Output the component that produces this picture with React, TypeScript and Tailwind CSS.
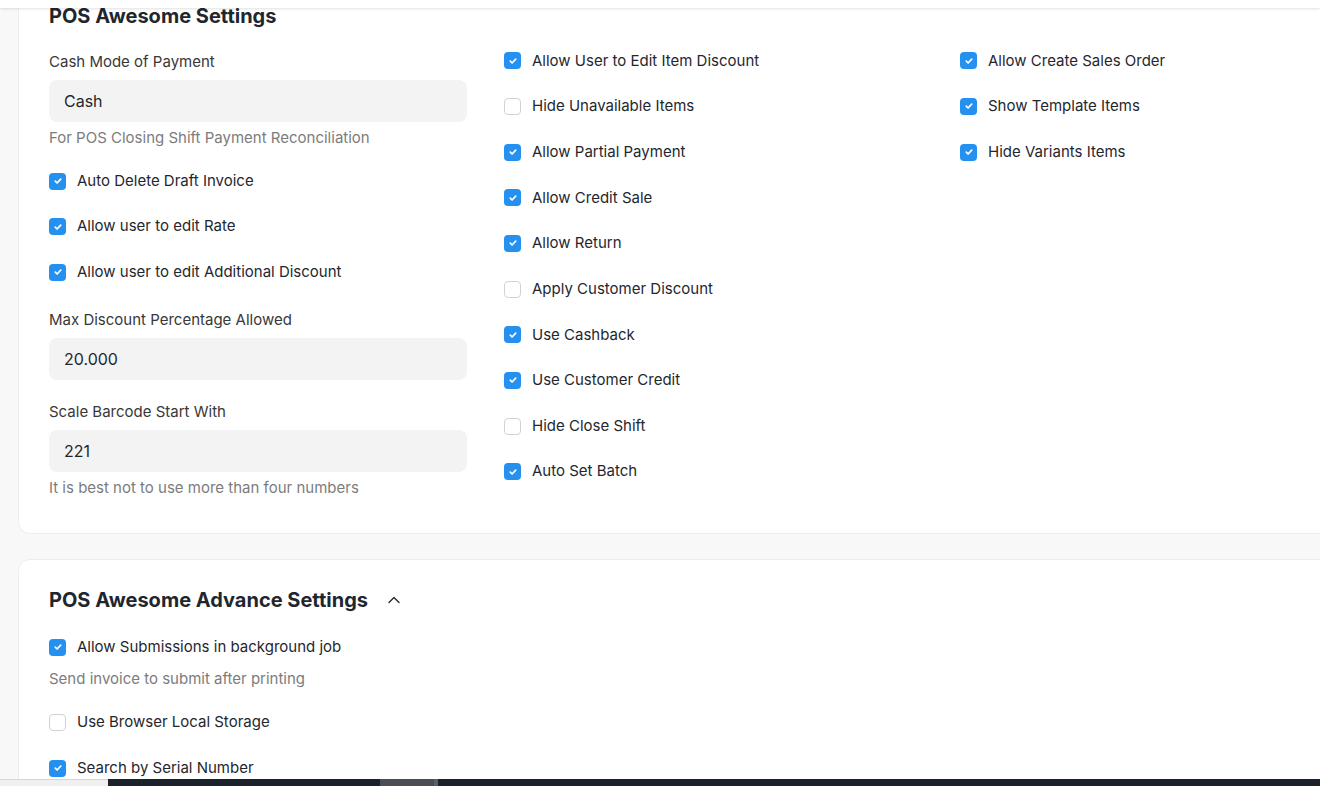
import { ChevronUp } from 'lucide-react'

type Item = { label: string; checked: boolean }

const col2: Item[] = [
  { label: 'Allow User to Edit Item Discount', checked: true },
  { label: 'Hide Unavailable Items', checked: false },
  { label: 'Allow Partial Payment', checked: true },
  { label: 'Allow Credit Sale', checked: true },
  { label: 'Allow Return', checked: true },
  { label: 'Apply Customer Discount', checked: false },
  { label: 'Use Cashback', checked: true },
  { label: 'Use Customer Credit', checked: true },
  { label: 'Hide Close Shift', checked: false },
  { label: 'Auto Set Batch', checked: true },
]

const col3: Item[] = [
  { label: 'Allow Create Sales Order', checked: true },
  { label: 'Show Template Items', checked: true },
  { label: 'Hide Variants Items', checked: true },
]

function Box({ checked }: { checked: boolean }) {
  if (!checked) {
    return <span className="w-[17px] h-[17px] shrink-0 rounded-[4px] border border-[#cfd3d8] bg-white"></span>
  }
  return (
    <span className="w-[17px] h-[17px] shrink-0 rounded-[4px] bg-[#2490ef] flex items-center justify-center">
      <svg width="10" height="10" viewBox="0 0 10 10" fill="none">
        <path d="M2.3 5.2l1.8 1.8 3.6-3.8" stroke="white" strokeWidth="1.7" strokeLinecap="round" strokeLinejoin="round" />
      </svg>
    </span>
  )
}

function Check({ item, h = 'h-[46px]' }: { item: Item; h?: string }) {
  return (
    <div className={`flex items-center gap-[11px] ${h}`}>
      <Box checked={item.checked} />
      <span className="text-[15px] text-[#1f272e]">{item.label}</span>
    </div>
  )
}

function Field({ label, value }: { label: string; value: string }) {
  return (
    <div>
      <div className="text-[15px] leading-5 text-[#383838] mb-2">{label}</div>
      <div className="h-[42px] rounded-lg bg-[#f3f3f3] px-[15px] flex items-center text-[16px] text-[#1f272e]">{value}</div>
    </div>
  )
}

export default function App() {
  return (
    <div className="h-[786px] overflow-hidden bg-[#f8f8f8] relative" style={{ fontFamily: 'Inter, "Noto Sans", sans-serif' }}>
      {/* barra superior fixa */}
      <div className="absolute top-0 left-0 right-0 h-2 bg-white shadow-[0_1px_3px_rgba(0,0,0,0.12)] z-10"></div>

      <div className="-mt-[30px] pl-[18px]">
        {/* Card 1 */}
        <section className="w-[1440px] bg-white rounded-xl border border-[#ededed] pl-[30px] pt-[31px] pb-[35px]">
          <h2 className="text-[20px] leading-7 font-bold text-[#1f272e]">POS Awesome Settings</h2>

          <div className="mt-2 grid grid-cols-[455px_456px_1fr]">
            <div className="pt-[14px] pr-[37px]">
              <Field label="Cash Mode of Payment" value="Cash" />
              <div className="mt-[6px] text-[15px] leading-5 text-[#7c7c7c]">For POS Closing Shift Payment Reconciliation</div>

              <div className="mt-[10px]">
                <Check item={{ label: 'Auto Delete Draft Invoice', checked: true }} h="h-[46px]" />
                <Check item={{ label: 'Allow user to edit Rate', checked: true }} h="h-[45px]" />
                <Check item={{ label: 'Allow user to edit Additional Discount', checked: true }} h="h-[46px]" />
              </div>

              <div className="mt-[15px]">
                <Field label="Max Discount Percentage Allowed" value="20.000" />
              </div>
              <div className="mt-[22px]">
                <Field label="Scale Barcode Start With" value="221" />
              </div>
              <div className="mt-[6px] text-[15px] leading-5 text-[#7c7c7c]">It is best not to use more than four numbers</div>
            </div>

            <div>
              {col2.map((it) => (
                <Check key={it.label} item={it} h="h-[45.67px]" />
              ))}
            </div>

            <div>
              {col3.map((it) => (
                <Check key={it.label} item={it} h="h-[45.67px]" />
              ))}
            </div>
          </div>
        </section>

        {/* Card 2 */}
        <section className="mt-[25px] w-[1440px] bg-white rounded-xl border border-[#ededed] pl-[30px] pt-[26px] pb-4">
          <div className="flex items-center gap-4 h-7">
            <h2 className="text-[20px] leading-7 font-bold text-[#1f272e]">POS Awesome Advance Settings</h2>
            <ChevronUp className="w-5 h-5 text-[#1f272e]" strokeWidth={1.6} />
          </div>

          <div className="mt-[15px]">
            <Check item={{ label: 'Allow Submissions in background job', checked: true }} h="h-9" />
            <div className="mt-1 text-[15px] leading-5 text-[#7c7c7c]">Send invoice to submit after printing</div>
            <div className="mt-[10px]">
              <Check item={{ label: 'Use Browser Local Storage', checked: false }} />
              <Check item={{ label: 'Search by Serial Number', checked: true }} />
            </div>
          </div>
        </section>
      </div>

      {/* faixa inferior */}
      <div className="absolute bottom-0 left-0 right-0 h-[7px] flex z-10">
        <div className="w-[108px] bg-[#f0f0f0] border-t border-[#d6d6d6]"></div>
        <div className="w-[272px] bg-[#1b222c]"></div>
        <div className="w-[54px] bg-[#4a4d53]"></div>
        <div className="w-1 bg-[#5c5f64]"></div>
        <div className="flex-1 bg-[#1b222c]"></div>
      </div>
    </div>
  )
}
